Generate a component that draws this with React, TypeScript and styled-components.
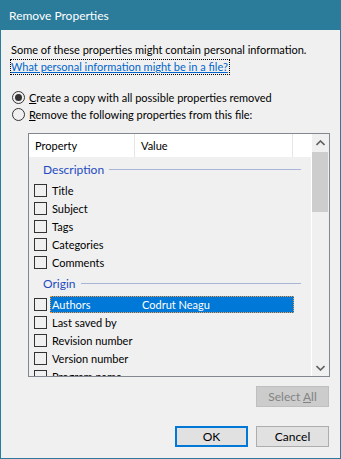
import styled, { createGlobalStyle } from "styled-components";

const GlobalStyle = createGlobalStyle`
    body {
        margin: 0;
        font-family: Lato, "Noto Sans", sans-serif;
        font-size: 11px;
        color: #000;
    }
`;

const groups = [
    {
        title: "Description",
        items: [{ name: "Title" }, { name: "Subject" }, { name: "Tags" }, { name: "Categories" }, { name: "Comments" }],
    },
    {
        title: "Origin",
        items: [
            { name: "Authors", value: "Codrut Neagu", selected: true },
            { name: "Last saved by" },
            { name: "Revision number" },
            { name: "Version number" },
            { name: "Program name" },
        ],
    },
];

const App = () => {
    return (
        <>
            <GlobalStyle />
            <Dialog>
                <TitleBar>Remove Properties</TitleBar>
                <Body>
                    <Intro>Some of these properties might contain personal information.</Intro>
                    <HelpLink>What personal information might be in a file?</HelpLink>

                    <Options>
                        <Option>
                            <Radio $checked />
                            <span>
                                <u>C</u>reate a copy with all possible properties removed
                            </span>
                        </Option>
                        <Option>
                            <Radio />
                            <span>
                                <u>R</u>emove the following properties from this file:
                            </span>
                        </Option>
                    </Options>

                    <ListBox>
                        <ListMain>
                            <ListHeader>
                                <HeaderCell $width={106}>Property</HeaderCell>
                                <HeaderCell $width={158}>Value</HeaderCell>
                                <HeaderCell $width={18} />
                            </ListHeader>
                            <ListRows>
                                {groups.map((group) => (
                                    <div key={group.title}>
                                        <GroupHeader>
                                            <span>{group.title}</span>
                                        </GroupHeader>
                                        {group.items.map((item) => (
                                            <Row key={item.name}>
                                                <Check />
                                                <Selection $selected={!!item.selected}>
                                                    <span>{item.name}</span>
                                                    <span>{item.value}</span>
                                                </Selection>
                                            </Row>
                                        ))}
                                    </div>
                                ))}
                            </ListRows>
                        </ListMain>
                        <ScrollBar>
                            <ScrollArrow>
                                <svg width="9" height="6" viewBox="0 0 9 6">
                                    <path d="M0.5 5 L4.5 1 L8.5 5" fill="none" stroke="#606060" strokeWidth="1.6" />
                                </svg>
                            </ScrollArrow>
                            <ScrollTrack>
                                <Thumb />
                            </ScrollTrack>
                            <ScrollArrow>
                                <svg width="9" height="6" viewBox="0 0 9 6">
                                    <path d="M0.5 1 L4.5 5 L8.5 1" fill="none" stroke="#606060" strokeWidth="1.6" />
                                </svg>
                            </ScrollArrow>
                        </ScrollBar>
                    </ListBox>

                    <SelectRow>
                        <Button disabled>
                            Select <u>A</u>ll
                        </Button>
                    </SelectRow>

                    <Footer>
                        <Button $default>OK</Button>
                        <Button>Cancel</Button>
                    </Footer>
                </Body>
            </Dialog>
        </>
    );
};

const Dialog = styled.div`
    width: 341px;
    height: 459px;
    box-sizing: border-box;
    border: 1px solid #2b7b9a;
    border-top: none;
    background: #f0f0f0;
    display: flex;
    flex-direction: column;
`;

const TitleBar = styled.div`
    height: 30px;
    background: #2b7b9a;
    color: #fff;
    font-size: 12px;
    display: flex;
    align-items: center;
    padding-left: 9px;
    margin: 0 -1px;
`;

const Body = styled.div`
    padding: 0 11px 0 10px;
    display: flex;
    flex-direction: column;
`;

const Intro = styled.div`
    margin-top: 12px;
    line-height: 16px;
    white-space: nowrap;
`;

const HelpLink = styled.a`
    align-self: flex-start;
    margin-top: 2px;
    padding-right: 1px;
    line-height: 14px;
    color: #0066cc;
    text-decoration: underline;
    outline: 1px dotted #000;
`;

const Options = styled.div`
    margin-top: 15px;
    display: flex;
    flex-direction: column;
`;

const Option = styled.label`
    display: flex;
    align-items: center;
    gap: 4px;
    height: 17px;
    margin-left: 1px;
    white-space: nowrap;
`;

const Radio = styled.span<{ $checked?: boolean }>`
    width: 13px;
    height: 13px;
    box-sizing: border-box;
    border: 1px solid #333;
    border-radius: 50%;
    display: flex;
    align-items: center;
    justify-content: center;

    &::after {
        content: "";
        width: 7px;
        height: 7px;
        border-radius: 50%;
        background: ${(p) => (p.$checked ? "#333" : "transparent")};
    }
`;

const ListBox = styled.div`
    margin: 10px 0 0 17px;
    width: 302px;
    height: 244px;
    box-sizing: border-box;
    border: 1px solid #828790;
    display: flex;
    overflow: hidden;
`;

const ListMain = styled.div`
    flex: 1;
    border-right: 1px solid #fff;
    display: flex;
    flex-direction: column;
    overflow: hidden;
`;

const ListHeader = styled.div`
    height: 23px;
    flex-shrink: 0;
    background: #fff;
    display: flex;
`;

const HeaderCell = styled.div<{ $width: number }>`
    width: ${(p) => p.$width}px;
    flex-shrink: 0;
    box-sizing: border-box;
    border-right: 1px solid #e5e5e5;
    padding-left: 6px;
    display: flex;
    align-items: center;

    &:last-child {
        border-right: none;
    }
`;

const ListRows = styled.div`
    display: flex;
    flex-direction: column;
`;

const GroupHeader = styled.div`
    height: 24px;
    display: flex;
    align-items: center;
    padding: 0 10px 0 14px;
    color: #1e4bc0;
    font-size: 12px;

    &::after {
        content: "";
        flex: 1;
        height: 1px;
        margin-left: 5px;
        background: #a9b5d6;
    }
`;

const Row = styled.div`
    height: 18px;
    display: flex;
    align-items: center;
    padding-left: 5px;
`;

const Check = styled.span`
    width: 13px;
    height: 13px;
    box-sizing: border-box;
    border: 1px solid #333;
    flex-shrink: 0;
`;

const Selection = styled.div<{ $selected: boolean }>`
    margin-left: 3px;
    width: 244px;
    height: 17px;
    box-sizing: border-box;
    padding-left: 1px;
    display: grid;
    grid-template-columns: 90px 1fr;
    align-items: center;
    white-space: nowrap;
    background: ${(p) => (p.$selected ? "#0078d7" : "transparent")};
    color: ${(p) => (p.$selected ? "#fff" : "#000")};
    border: 1px dotted ${(p) => (p.$selected ? "#ff9a3c" : "transparent")};
`;

const ScrollBar = styled.div`
    width: 17px;
    flex-shrink: 0;
    display: flex;
    flex-direction: column;
    background: #f0f0f0;
`;

const ScrollArrow = styled.div`
    height: 17px;
    display: flex;
    align-items: center;
    justify-content: center;
`;

const ScrollTrack = styled.div`
    flex: 1;
    display: flex;
    flex-direction: column;
    padding: 1px 1px 0 0;
`;

const Thumb = styled.div`
    height: 60px;
    background: #cdcdcd;
`;

const SelectRow = styled.div`
    display: flex;
    justify-content: flex-end;
    margin-top: 9px;
`;

const Footer = styled.div`
    display: flex;
    justify-content: flex-end;
    gap: 8px;
    margin-top: 19px;
`;

const Button = styled.button<{ $default?: boolean }>`
    width: 73px;
    height: 21px;
    box-sizing: border-box;
    font: inherit;
    font-size: 12px;
    padding: 0;
    background: #e1e1e1;
    color: #000;
    border: ${(p) => (p.$default ? "2px solid #0078d7" : "1px solid #adadad")};

    &:disabled {
        background: #cccccc;
        border-color: #bfbfbf;
        color: #838383;
    }
`;

export default App;
